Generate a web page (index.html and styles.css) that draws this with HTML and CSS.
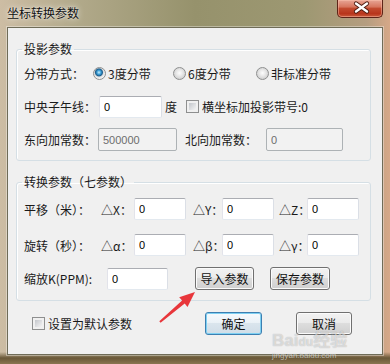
FILE: index.html
```html
<!DOCTYPE html>
<html lang="zh-CN">
<head>
    <meta charset="UTF-8">
    <meta name="viewport" content="width=device-width, initial-scale=1.0">
    <title>坐标转换参数</title>
    <link rel="stylesheet" href="styles.css">
</head>
<body>
    <div class="window">
        <div class="titlebar">
            <span class="title">坐标转换参数</span>
            <button type="button" class="close">
                <svg width="46" height="18" viewBox="0 0 46 18">
                    <path d="M19 4.5 L30 12.5 M30 4.5 L19 12.5" stroke="#4a1a10" stroke-width="4.2" stroke-linecap="round"/>
                    <path d="M19 4.5 L30 12.5 M30 4.5 L19 12.5" stroke="#fff" stroke-width="2.4" stroke-linecap="round"/>
                </svg>
            </button>
        </div>

        <div class="client">
            <fieldset class="group g1">
                <legend>投影参数</legend>
                <div class="row">
                    <span class="lbl w69">分带方式：</span>
                    <label class="opt o1"><input type="radio" name="zone" checked>3度分带</label>
                    <label class="opt o2"><input type="radio" name="zone">6度分带</label>
                    <label class="opt"><input type="radio" name="zone">非标准分带</label>
                </div>
                <div class="row">
                    <span class="lbl w75">中央子午线：</span>
                    <input type="text" class="txt meridian" value="0">
                    <span class="unit">度</span>
                    <label class="chk zone-no"><input type="checkbox">横坐标加投影带号:0</label>
                </div>
                <div class="row">
                    <span class="lbl w74">东向加常数：</span>
                    <input type="text" class="txt east" value="500000" disabled>
                    <span class="lbl north">北向加常数：</span>
                    <input type="text" class="txt northv" value="0" disabled>
                </div>
            </fieldset>

            <fieldset class="group g2">
                <legend>转换参数（七参数）</legend>
                <div class="row r1">
                    <span class="lbl w77">平移（米）：</span>
                    <span class="dl d1">△X：</span>
                    <input type="text" class="txt p" value="0">
                    <span class="dl d2">△Y：</span>
                    <input type="text" class="txt p" value="0">
                    <span class="dl d3">△Z：</span>
                    <input type="text" class="txt p" value="0">
                </div>
                <div class="row r2">
                    <span class="lbl w77">旋转（秒）：</span>
                    <span class="dl d1">△α：</span>
                    <input type="text" class="txt p" value="0">
                    <span class="dl d2">△β：</span>
                    <input type="text" class="txt p" value="0">
                    <span class="dl d3">△γ：</span>
                    <input type="text" class="txt p" value="0">
                </div>
                <div class="row r3">
                    <span class="lbl w83">缩放K(PPM):</span>
                    <input type="text" class="txt scale" value="0">
                    <button type="button" class="btn import">导入参数</button>
                    <button type="button" class="btn save">保存参数</button>
                </div>
            </fieldset>

            <div class="footer">
                <label class="chk"><input type="checkbox">设置为默认参数</label>
                <button type="button" class="btn ok">确定</button>
                <button type="button" class="btn cancel">取消</button>
            </div>
        </div>

        <svg class="arrow" width="390" height="364" viewBox="0 0 390 364">
            <polygon points="195,292 187.5,307 184.7,303.6 160.6,322.8 159.3,321.3 182.1,300.6 179.2,297.3" fill="#e8363b"/>
        </svg>
        <div class="mark">
            <span class="mark-big">Bai<i>du</i>经验</span>
            <span class="mark-small">jingyan.baidu.com</span>
        </div>
    </div>
</body>
</html>
```

FILE: styles.css
```css
body {
    margin: 0;
    font-family: "Noto Sans CJK SC", "Noto Sans", sans-serif;
    font-size: 12px;
    color: #1a1a1a;
}
.window {
    position: relative;
    width: 390px;
    height: 364px;
    overflow: hidden;
    background:
        linear-gradient(180deg, rgba(0, 0, 0, 0) 0, rgba(0, 0, 0, 0) 352px, #6a5838 358px, #8a7550 364px),
        linear-gradient(90deg, #cdbda4 0%, #b1a98a 20%, #96926c 50%, #9d9872 78%, #b59d80 94%, #d6a888 100%);
}
.titlebar {
    display: flex;
    justify-content: space-between;
    align-items: flex-start;
    height: 27px;
}
.title {
    padding: 5px 0 0 7px;
    line-height: 16px;
    color: #111;
    text-shadow: 0 0 6px rgba(255, 255, 255, 0.9), 0 0 2px rgba(255, 255, 255, 0.7);
}
.close {
    width: 46px;
    height: 18px;
    margin-right: 7px;
    padding: 0;
    border: 1px solid #5e2418;
    border-top: none;
    border-radius: 0 0 5px 5px;
    background: linear-gradient(#e7a595 0, #d7765f 40%, #c24a2f 50%, #b8351c 80%, #c95a3c 100%);
    box-shadow: inset 0 0 0 1px rgba(255, 200, 180, 0.45);
}
.close svg {
    display: block;
    margin: -1px 0 0 -1px;
}
.client {
    box-sizing: border-box;
    height: 328px;
    margin: 0 7px;
    padding-top: 13px;
    background: #f0f0f0;
    border: 1px solid #6f6c58;
    box-shadow: 0 0 0 1px rgba(255, 255, 255, 0.35);
}
.group {
    box-sizing: border-box;
    width: 355px;
    margin: 0 0 0 8px;
    padding: 5px 0 9px 7px;
    border: 1px solid #d5dfe5;
    border-radius: 3px;
    box-shadow: inset 1px 1px 0 #fff;
    min-inline-size: 0;
}
.group legend {
    margin-left: -2px;
    padding: 0 2px;
    line-height: 16px;
}
.g2 {
    margin-top: 13px;
    padding: 8px 0 10px 7px;
}
.row {
    display: flex;
    align-items: center;
    height: 23px;
    white-space: nowrap;
}
.g1 .row + .row {
    margin-top: 10px;
}
.g2 .row {
    height: 22px;
}
.g2 .r2 {
    margin-top: 14px;
}
.g2 .r3 {
    margin-top: 11px;
    height: 23px;
}
.lbl, .dl, .unit {
    flex: none;
}
.w69 { width: 69px; }
.w74 { width: 74px; }
.w75 { width: 75px; }
.w77 { width: 77px; }
.w83 { width: 83px; }
.opt, .chk {
    display: flex;
    align-items: center;
    flex: none;
}
.o1 { width: 80px; }
.o2 { width: 83px; }
input[type=radio] {
    appearance: none;
    box-sizing: border-box;
    width: 13px;
    height: 13px;
    margin: 0 2px 0 0;
    border: 1px solid #8e8f8f;
    border-radius: 50%;
    background: radial-gradient(circle at 50% 45%, #fdfdfd 0, #e9e9e9 3px, #d2d2d2 6px);
}
input[type=radio]:checked {
    background: radial-gradient(circle at 45% 40%, #c8f0ff 0, #3d9fd6 2px, #1b5d8c 3.5px, #dcdcdc 4.5px, #f3f3f3 6px);
}
input[type=checkbox] {
    appearance: none;
    box-sizing: border-box;
    width: 13px;
    height: 13px;
    margin: 0 3px 0 0;
    padding: 2px;
    border: 1px solid #8e8f8f;
    background: #fafafa linear-gradient(135deg, #c3c6cb, #f4f4f4) content-box;
}
.txt {
    box-sizing: border-box;
    flex: none;
    height: 22px;
    margin: 0;
    padding: 0 4px;
    border: 1px solid;
    border-color: #abadb3 #dbdfe6 #e3e9ef #e2e3ea;
    border-radius: 2px;
    background: #fff;
    font-family: "Liberation Sans", sans-serif;
    font-size: 11px;
    color: #000;
}
.txt:disabled {
    height: 23px;
    border-color: #adb2b5;
    background: #f2f2f2;
    color: #6d6d6d;
}
.meridian { width: 63px; }
.unit { margin-left: 3px; }
.zone-no { margin-left: 9px; }
.east { width: 79px; }
.north {
    width: 81px;
    margin-left: 8px;
}
.northv { width: 77px; }
.d1 { width: 33px; }
.d2 { width: 29px; margin-left: 7px; }
.d3 { width: 28px; margin-left: 5px; }
.p { width: 52px; }
.scale {
    width: 61px;
    height: 22px;
}
.btn {
    box-sizing: border-box;
    flex: none;
    height: 23px;
    padding: 0;
    border: 1px solid #707070;
    border-radius: 3px;
    background: linear-gradient(#f2f2f2 0, #ebebeb 45%, #dddddd 50%, #cfcfcf 100%);
    box-shadow: inset 0 0 0 1px #fbfbfb;
    font-family: inherit;
    font-size: 12px;
    color: #111;
}
.import {
    width: 59px;
    margin-left: 27px;
}
.save {
    width: 60px;
    margin-left: 16px;
}
.footer {
    display: flex;
    align-items: center;
    height: 23px;
    margin-top: 11px;
    padding-left: 24px;
}
.footer .chk { width: 173px; }
.ok {
    width: 57px;
    border-color: #3c7fb1;
    background: linear-gradient(#f6fafd 0, #ebf2f7 45%, #dae5ed 50%, #d0dde7 100%);
    box-shadow: inset 0 0 0 1px #7ed0f2;
}
.cancel {
    width: 56px;
    margin-left: 34px;
}
.arrow {
    position: absolute;
    left: 0;
    top: 0;
    pointer-events: none;
}
.mark {
    position: absolute;
    left: 272px;
    top: 332px;
    display: flex;
    flex-direction: column;
    pointer-events: none;
}
.mark-big {
    font-family: "Liberation Sans", "Noto Sans CJK SC", sans-serif;
    font-size: 17px;
    font-weight: bold;
    line-height: 18px;
    color: rgba(255, 255, 255, 0.55);
    text-shadow: 0 0 1px rgba(0, 0, 0, 0.3);
}
.mark-big i {
    font-style: normal;
    font-size: 12px;
}
.mark-small {
    font-family: "Liberation Sans", sans-serif;
    font-size: 8px;
    line-height: 10px;
    color: rgba(255, 255, 255, 0.6);
    text-shadow: 0 0 1px rgba(0, 0, 0, 0.25);
}
```
